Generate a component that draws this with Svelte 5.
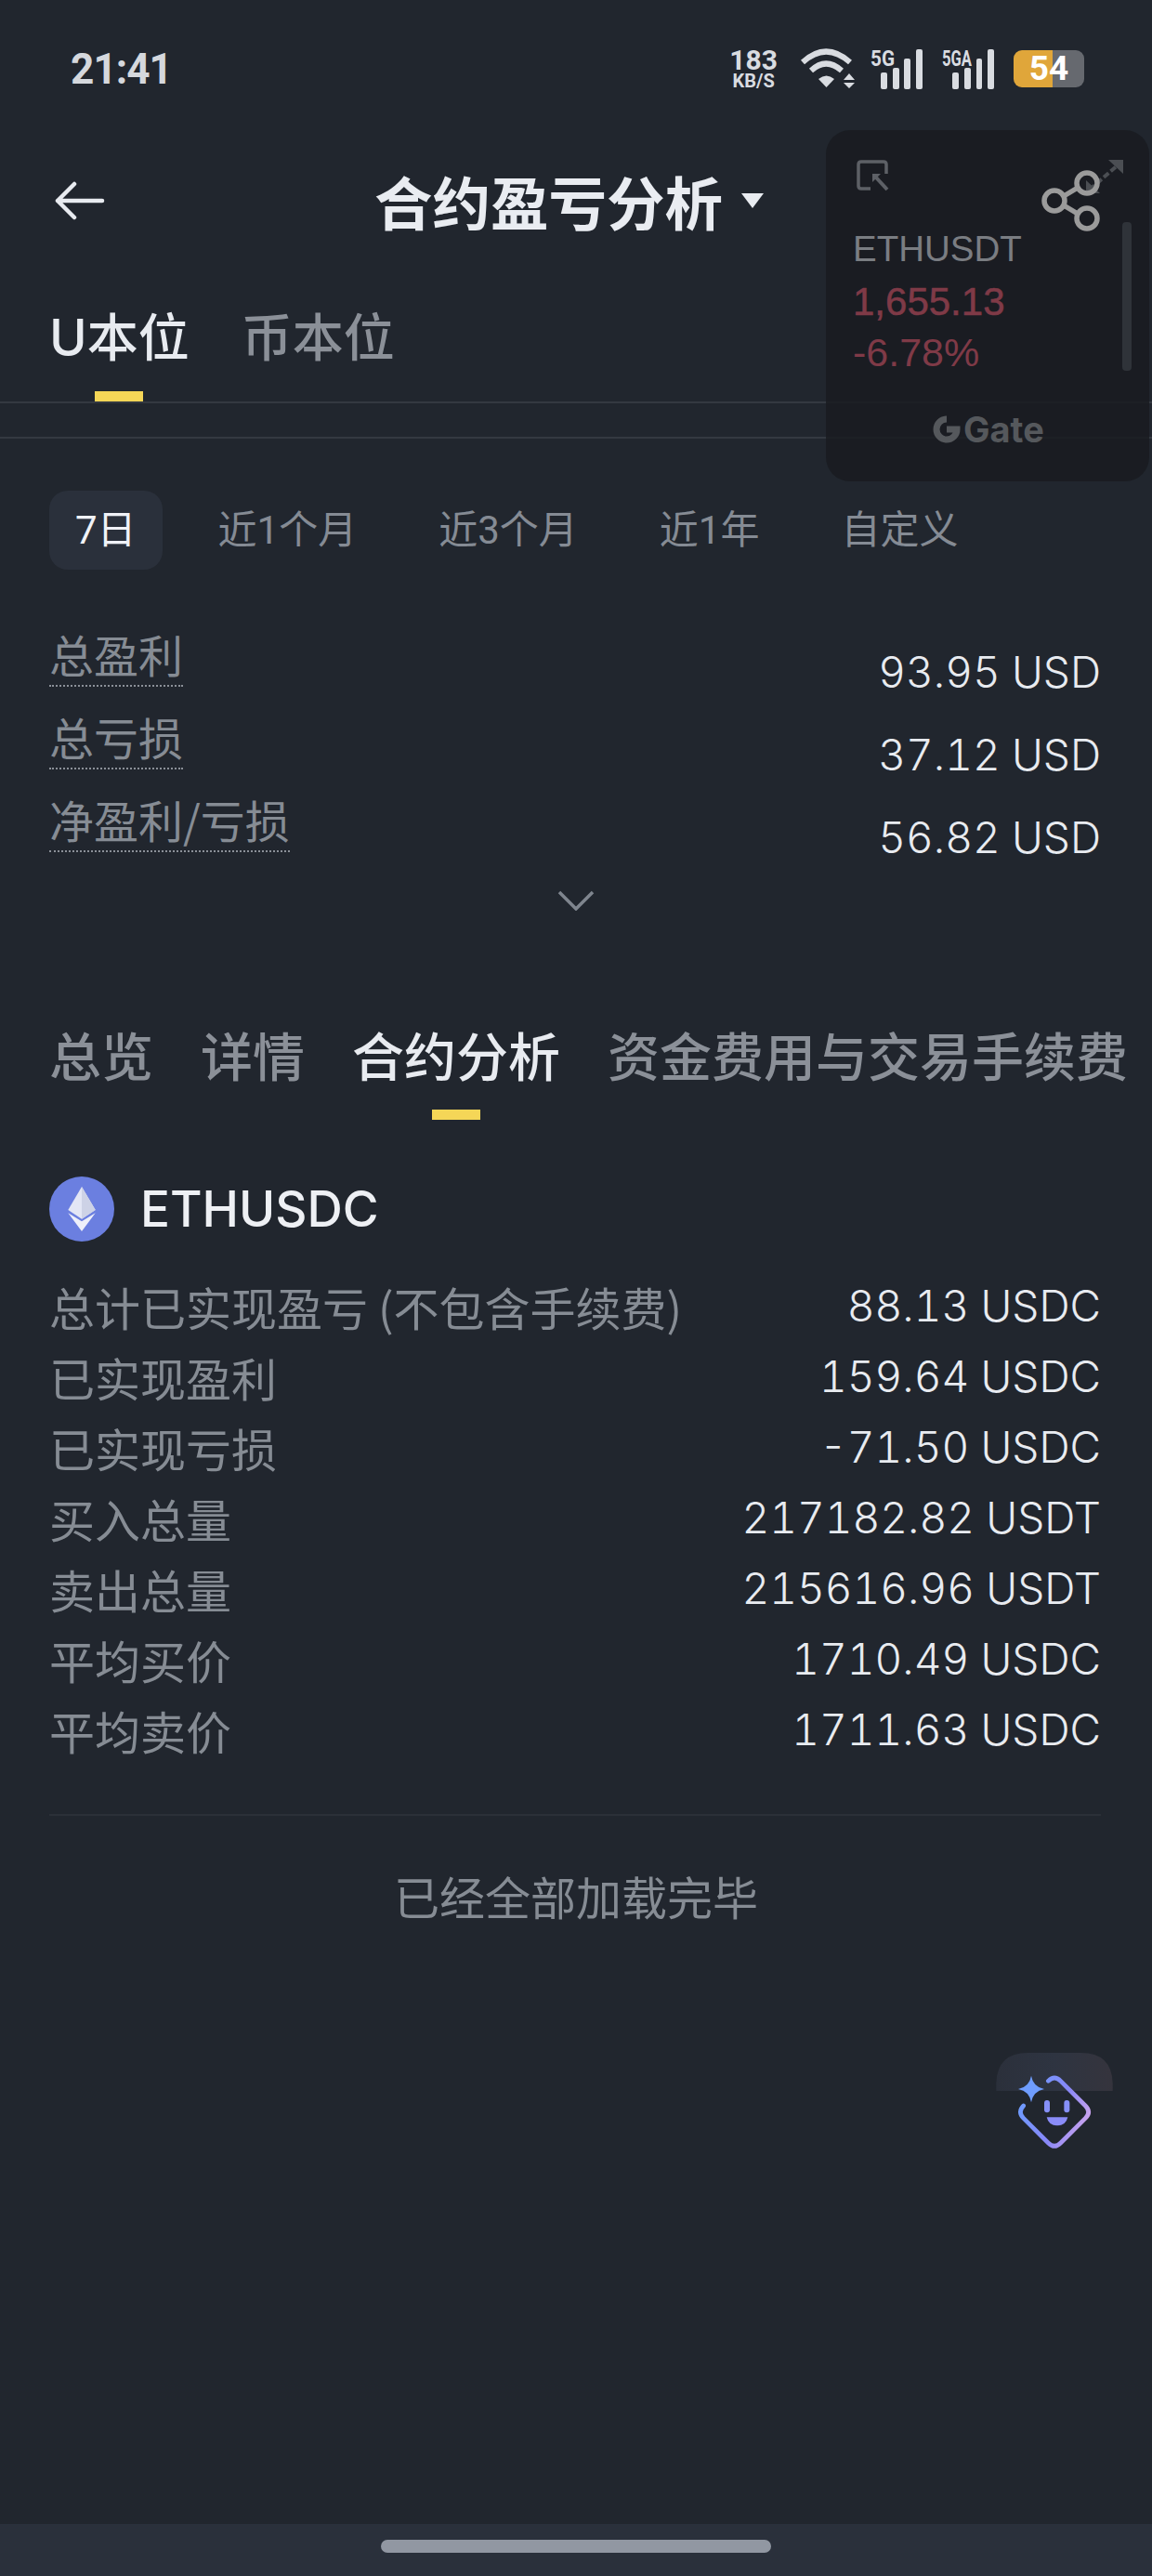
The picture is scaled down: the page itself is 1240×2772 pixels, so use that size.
<script>
	const ranges = ['7日', '近1个月', '近3个月', '近1年', '自定义']
	const totals = [
		['总盈利', '93.95 USD'],
		['总亏损', '37.12 USD'],
		['净盈利/亏损', '56.82 USD']
	]
	const sections = ['总览', '详情', '合约分析', '资金费用与交易手续费']
	const details = [
		['总计已实现盈亏 (不包含手续费)', '88.13 USDC'],
		['已实现盈利', '159.64 USDC'],
		['已实现亏损', '-71.50 USDC'],
		['买入总量', '217182.82 USDT'],
		['卖出总量', '215616.96 USDT'],
		['平均买价', '1710.49 USDC'],
		['平均卖价', '1711.63 USDC']
	]
</script>

<main>
	<div class="status">
		<span class="time">21:41</span>
		<div class="status-icons">
			<div class="speed"><b>183</b><small>KB/S</small></div>
			<svg class="wifi" width="59" height="42" viewBox="0 0 59 42" fill="none" stroke="#d9dce1" stroke-width="6">
				<path d="M3 14 Q28 -9 54 14" />
				<path d="M12 23 Q28 8 45 23" />
				<path d="M20 32 L28.500 41 L37 32 Q28.500 25 20 32Z" fill="#d9dce1" stroke="none" />
				<path d="M47 33 L53 26 L59 33Z M47 36 L59 36 L53 42Z" fill="#d9dce1" stroke="none" />
			</svg>
			<svg class="cell" width="56" height="44" viewBox="0 0 56 44" fill="#d9dce1">
				<text x="0" y="19" font-family="Roboto" font-weight="700" font-size="24" textLength="26" lengthAdjust="spacingAndGlyphs">5G</text>
				<rect x="11" y="26" width="7" height="18" rx="2" />
				<rect x="24" y="21" width="7" height="23" rx="2" />
				<rect x="36" y="11" width="7" height="33" rx="2" />
				<rect x="49" y="1" width="7" height="43" rx="2" />
			</svg>
			<svg class="cell" width="56" height="44" viewBox="0 0 56 44" fill="#d9dce1">
				<text x="0" y="19" font-family="Roboto" font-weight="700" font-size="24" textLength="32" lengthAdjust="spacingAndGlyphs">5GA</text>
				<rect x="11" y="26" width="7" height="18" rx="2" />
				<rect x="24" y="21" width="7" height="23" rx="2" />
				<rect x="37" y="11" width="6" height="33" rx="2" />
				<rect x="49" y="1" width="7" height="43" rx="2" />
			</svg>
			<div class="battery"><span>54</span></div>
		</div>
	</div>

	<div class="nav">
		<svg class="back" width="54" height="42" viewBox="0 0 54 42" fill="none" stroke="#e8ebf0" stroke-width="4.5" stroke-linecap="round" stroke-linejoin="round">
			<path d="M51 21 H3 M21 3 L3 21 L21 39" />
		</svg>
		<h1>合约盈亏分析</h1>
		<span class="caret"></span>
	</div>

	<div class="unit-tabs">
		<div class="tab on"><span>U本位</span><i></i></div>
		<div class="tab"><span>币本位</span><i></i></div>
	</div>
	<div class="rule"></div>

	<div class="ranges">
		{#each ranges as r, i}
			<span class="range" class:active={i === 0}>{r}</span>
		{/each}
	</div>

	<div class="totals">
		{#each totals as [label, value]}
			<div class="total">
				<span class="dotted">{label}</span>
				<span class="num">{value}</span>
			</div>
		{/each}
	</div>

	<svg class="chevron" width="40" height="22" viewBox="0 0 40 22" fill="none" stroke="#7f858e" stroke-width="3.5">
		<path d="M2 2 L20 20 L38 2" />
	</svg>

	<div class="sections">
		{#each sections as s, i}
			<div class="tab" class:on={i === 2}><span>{s}</span><i></i></div>
		{/each}
	</div>

	<div class="pair">
		<svg width="70" height="70" viewBox="-35 -35 70 70">
			<circle r="35" fill="#6b7fe0" />
			<path d="M0 -24 L14.7 1 L0 10.7 L-14.7 1Z" fill="#e3e6f5" />
			<path d="M0 -24 L14.7 1 L0 10.7Z" fill="#cdd2e6" />
			<path d="M-14.7 4.3 L0 13.3 L14.7 4.3 L0 24Z" fill="#eef0fa" />
		</svg>
		<span>ETHUSDC</span>
	</div>

	<div class="details">
		{#each details as [label, value]}
			<div class="detail">
				<span class="label">{label}</span>
				<span class="num">{value}</span>
			</div>
		{/each}
	</div>

	<div class="divider"></div>
	<p class="end">已经全部加载完毕</p>

	<div class="home"><span></span></div>

	<!-- floating price widget -->
	<aside class="widget">
		<svg class="pip" width="36" height="34" viewBox="0 0 36 34" fill="none" stroke="#5d6066" stroke-width="3.5">
			<path d="M15 31 H5 Q2 31 2 28 V5 Q2 2 5 2 H29 Q32 2 32 5 V15" />
			<path d="M17 15 H26 L17 24Z" fill="#5d6066" stroke="none" />
			<path d="M21 19 L33 32" stroke-width="4" />
		</svg>
		<svg class="expand" width="44" height="40" viewBox="0 0 44 40" fill="#4b4e53" stroke="#4b4e53">
			<path d="M6 34 L38 6" stroke-width="4" stroke-dasharray="7 3" />
			<path d="M26 2 H42 V17Z" stroke="none" />
			<path d="M2 38 L2 24 L17 38Z" stroke="none" />
		</svg>
		<svg class="scroll" width="10" height="160" viewBox="0 0 10 160"><rect width="10" height="160" rx="4" fill="#2f3339" /></svg>
		<span class="sym">ETHUSDT</span>
		<span class="price">1,655.13</span>
		<span class="pct">-6.78%</span>
		<div class="gate">
			<svg width="30" height="30" viewBox="0 0 30 30" fill="none">
				<path d="M15 4 A11 11 0 1 0 26 15 H15" stroke="#55585c" stroke-width="7" />
			</svg>
			<span>Gate</span>
		</div>
	</aside>

	<svg class="share" width="70" height="66" viewBox="0 0 70 66" fill="none" stroke="#9b9b9b" stroke-width="5.5">
		<circle cx="15" cy="33" r="11" />
		<circle cx="50" cy="14" r="11" />
		<circle cx="50" cy="52" r="11" />
		<path d="M25 28 L40 19 M25 38 L40 47" />
	</svg>

	<svg class="assistant" width="200" height="160" viewBox="0 0 600 480">
		<defs>
			<linearGradient id="dome" x1="0" x2="1" y1="0" y2="0">
				<stop offset="0" stop-color="#2b303b" />
				<stop offset="0.5" stop-color="#2e3441" />
				<stop offset="1" stop-color="#35343d" />
			</linearGradient>
			<linearGradient id="face" x1="0" x2="1" y1="0.2" y2="0.6">
				<stop offset="0" stop-color="#6c9dff" />
				<stop offset="0.6" stop-color="#8887f7" />
				<stop offset="1" stop-color="#c9a3ee" />
			</linearGradient>
		</defs>
		<path d="M97 210 V185 Q100 87 200 87 H370 Q470 87 473 185 V210Z" fill="url(#dome)" />
		<path d="M265 178 Q285 158 305 178 L385 258 Q405 278 385 298 L305 378 Q285 398 265 378 L185 298 Q165 278 185 258" fill="none" stroke="url(#face)" stroke-width="14" stroke-linecap="round" />
		<path d="M210 161 Q216 197 252 204 Q216 211 210 247 Q204 211 168 204 Q204 197 210 161Z" fill="#6f9dff" />
		<rect x="252" y="240" width="18" height="40" rx="9" fill="#8690f8" />
		<rect x="316" y="240" width="18" height="40" rx="9" fill="#8690f8" />
		<path d="M260 295 H328 Q322 322 294 322 Q266 322 260 295Z" fill="#8a8cf8" />
	</svg>
</main>

<style>
	:global(body) {
		margin: 0;
		background: #21262e;
	}
	main {
		position: relative;
		width: 1240px;
		height: 2772px;
		display: flex;
		flex-direction: column;
		overflow: hidden;
		background: #21262e;
		color: #e8ebf0;
		font-family: "Noto Sans CJK SC", sans-serif;
	}
	.status {
		height: 140px;
		padding: 52px 73px 0 76px;
		box-sizing: border-box;
		display: flex;
		justify-content: space-between;
		align-items: flex-start;
	}
	.time {
		font: 700 46px/44px Roboto, sans-serif;
		letter-spacing: -1px;
		color: #d5d8dd;
		transform: scaleX(.96);
		transform-origin: left;
	}
	.status-icons {
		display: flex;
		align-items: center;
		gap: 21px;
		color: #d9dce1;
	}
	.status-icons svg {
		overflow: visible;
	}
	.wifi {
		margin: 0 -4px 0 3px;
	}
	.speed {
		display: flex;
		flex-direction: column;
		align-items: center;
		font-family: Roboto, sans-serif;
	}
	.speed b {
		font-size: 30px;
		line-height: 26px;
	}
	.speed small {
		font-size: 20px;
		font-weight: 700;
		line-height: 18px;
	}
	.battery {
		width: 76px;
		height: 40px;
		border-radius: 9px;
		background: linear-gradient(90deg, #e0a63a 0 42px, #66696f 42px);
		display: flex;
		align-items: center;
		justify-content: center;
		font: 700 37px/40px Roboto, sans-serif;
		color: #fff;
	}
	.nav {
		height: 152px;
		position: relative;
		display: flex;
		align-items: center;
		padding-left: 403px;
		gap: 20px;
	}
	.back {
		position: absolute;
		left: 59px;
		top: 55px;
	}
	h1 {
		margin: 0;
		font-size: 62.5px;
		font-weight: 700;
		line-height: 80px;
		color: #e9ecf1;
		white-space: nowrap;
	}
	.caret {
		width: 0;
		height: 0;
		border-left: 12px solid transparent;
		border-right: 12px solid transparent;
		border-top: 16px solid #e9ecf1;
	}
	.unit-tabs {
		height: 142px;
		box-sizing: border-box;
		border-bottom: 2px solid #343941;
		padding: 33px 53px 0;
		display: flex;
		gap: 56px;
	}
	.rule {
		height: 36px;
		border-bottom: 2px solid #343941;
	}
	.tab {
		display: flex;
		flex-direction: column;
		align-items: center;
		font-size: 55px;
		font-weight: 500;
		line-height: 76px;
		color: #8b9098;
		white-space: nowrap;
	}
	.tab span {
		font-family: Inter, "Noto Sans CJK SC", sans-serif;
	}
	.tab i {
		width: 52px;
		height: 11px;
		margin-top: 20px;
		background: transparent;
	}
	.tab.on {
		color: #e8ebf0;
	}
	.tab.on i {
		background: #f5d657;
	}
	.ranges {
		display: flex;
		gap: 32px;
		margin: 56px 0 0 53px;
	}
	.range {
		height: 85px;
		padding: 0 28px;
		border-radius: 20px;
		font: 42px/85px Roboto, "Noto Sans CJK SC", sans-serif;
		color: #858b94;
		white-space: nowrap;
	}
	.range.active {
		background: #2a303b;
		color: #f0f2f7;
	}
	.totals {
		margin: 62px 55px 0 53px;
		display: flex;
		flex-direction: column;
		gap: 15px;
	}
	.total {
		display: flex;
		justify-content: space-between;
		align-items: flex-start;
		height: 74px;
	}
	.dotted {
		font-size: 48px;
		line-height: 56px;
		color: #868c94;
		padding-bottom: 6px;
		border-bottom: 2px dotted #8b9098;
	}
	.num {
		font: 300 46px/56px Inter, sans-serif;
		font-variant-numeric: tabular-nums;
		color: #e8ebf0;
		white-space: nowrap;
	}
	.total .num {
		padding-top: 20px;
	}
	.chevron {
		align-self: center;
		margin-top: 31px;
	}
	.sections {
		display: flex;
		gap: 51px;
		margin: 120px 0 0 53px;
	}
	.sections .tab {
		font-size: 56px;
	}
	.sections .tab i {
		margin-top: 18px;
	}
	.pair {
		margin: 61px 0 0 53px;
		display: flex;
		align-items: center;
		gap: 28px;
		font: 500 53px/70px Inter, sans-serif;
		color: #eef0f4;
	}
	.details {
		margin: 31px 55px 0 53px;
		display: flex;
		flex-direction: column;
	}
	.detail {
		height: 76px;
		display: flex;
		justify-content: space-between;
		align-items: center;
	}
	.label {
		font-size: 49px;
		color: #868c94;
		white-space: nowrap;
	}
	.divider {
		margin: 53px 55px 0 53px;
		border-top: 2px solid #2b3038;
	}
	.end {
		margin: 50px 0 0;
		text-align: center;
		font-size: 49px;
		line-height: 72px;
		color: #868c94;
	}
	.home {
		margin-top: auto;
		height: 56px;
		background: #2a303b;
		display: flex;
		justify-content: center;
		padding-top: 17px;
		box-sizing: border-box;
	}
	.home span {
		width: 420px;
		height: 14px;
		border-radius: 7px;
		background: #9197a2;
	}
	.widget {
		position: absolute;
		left: 889px;
		top: 140px;
		width: 348px;
		height: 378px;
		box-sizing: border-box;
		padding: 106px 0 0 29px;
		border-radius: 26px;
		background: rgba(24, 27, 32, .82);
		display: flex;
		flex-direction: column;
		font-family: "Liberation Sans", sans-serif;
	}
	.pip {
		position: absolute;
		left: 33px;
		top: 32px;
	}
	.expand {
		position: absolute;
		left: 278px;
		top: 30px;
	}
	.scroll {
		position: absolute;
		left: 319px;
		top: 99px;
	}
	.sym {
		font-size: 38.5px;
		line-height: 44px;
		color: #7a7d82;
	}
	.price {
		margin-top: 12px;
		font-size: 42px;
		line-height: 46px;
		-webkit-text-stroke: .6px #7f3a47;
		color: #7f3a47;
	}
	.pct {
		margin-top: 8px;
		font-size: 43px;
		line-height: 46px;
		color: #7f3a47;
	}
	.gate {
		position: absolute;
		left: 115px;
		top: 302px;
		display: flex;
		align-items: center;
		gap: 3px;
		font: 700 38px/40px Inter, sans-serif;
		color: #55585c;
	}
	.share {
		position: absolute;
		left: 1120px;
		top: 183px;
	}
	.assistant {
		position: absolute;
		left: 1040px;
		top: 2180px;
	}
</style>
